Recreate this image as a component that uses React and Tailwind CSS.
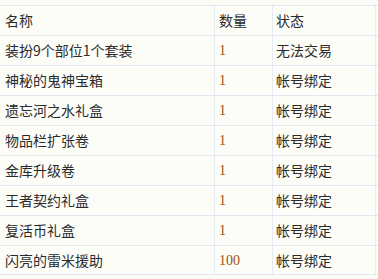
const rows = [
  { name: '装扮9个部位1个套装', qty: '1', status: '无法交易' },
  { name: '神秘的鬼神宝箱', qty: '1', status: '帐号绑定' },
  { name: '遗忘河之水礼盒', qty: '1', status: '帐号绑定' },
  { name: '物品栏扩张卷', qty: '1', status: '帐号绑定' },
  { name: '金库升级卷', qty: '1', status: '帐号绑定' },
  { name: '王者契约礼盒', qty: '1', status: '帐号绑定' },
  { name: '复活币礼盒', qty: '1', status: '帐号绑定' },
  { name: '闪亮的雷米援助', qty: '100', status: '帐号绑定' },
];

function Row({ name, qty, status, header, last }) {
  return (
    <div
      className={`flex h-[30px] border-t border-[#e1e7ee] ${last ? 'border-b' : ''}`}
    >
      <div className="w-[214px] flex items-center pl-[5px] text-[#2b2b2b]">{name}</div>
      <div
        className={`w-[58px] flex items-center pl-[4px] border-l border-[#e3ebf5] ${
          header ? 'text-[#2b2b2b]' : 'text-[#9a4f0a] font-["Liberation_Serif"]'
        }`}
      >
        {qty}
      </div>
      <div className="w-[104px] flex items-center pl-[3px] border-l border-r border-[#e3ebf5] text-[#2b2b2b]">
        {status}
      </div>
    </div>
  );
}

export default function App() {
  return (
    <div className="w-[378px] h-[279px] bg-[#fdfdf8] pt-[5px] overflow-hidden text-[14px] font-['Noto_Sans_CJK_SC',sans-serif]">
      <Row name="名称" qty="数量" status="状态" header />
      {rows.map((r, i) => (
        <Row key={i} {...r} last={i === rows.length - 1} />
      ))}
    </div>
  );
}
